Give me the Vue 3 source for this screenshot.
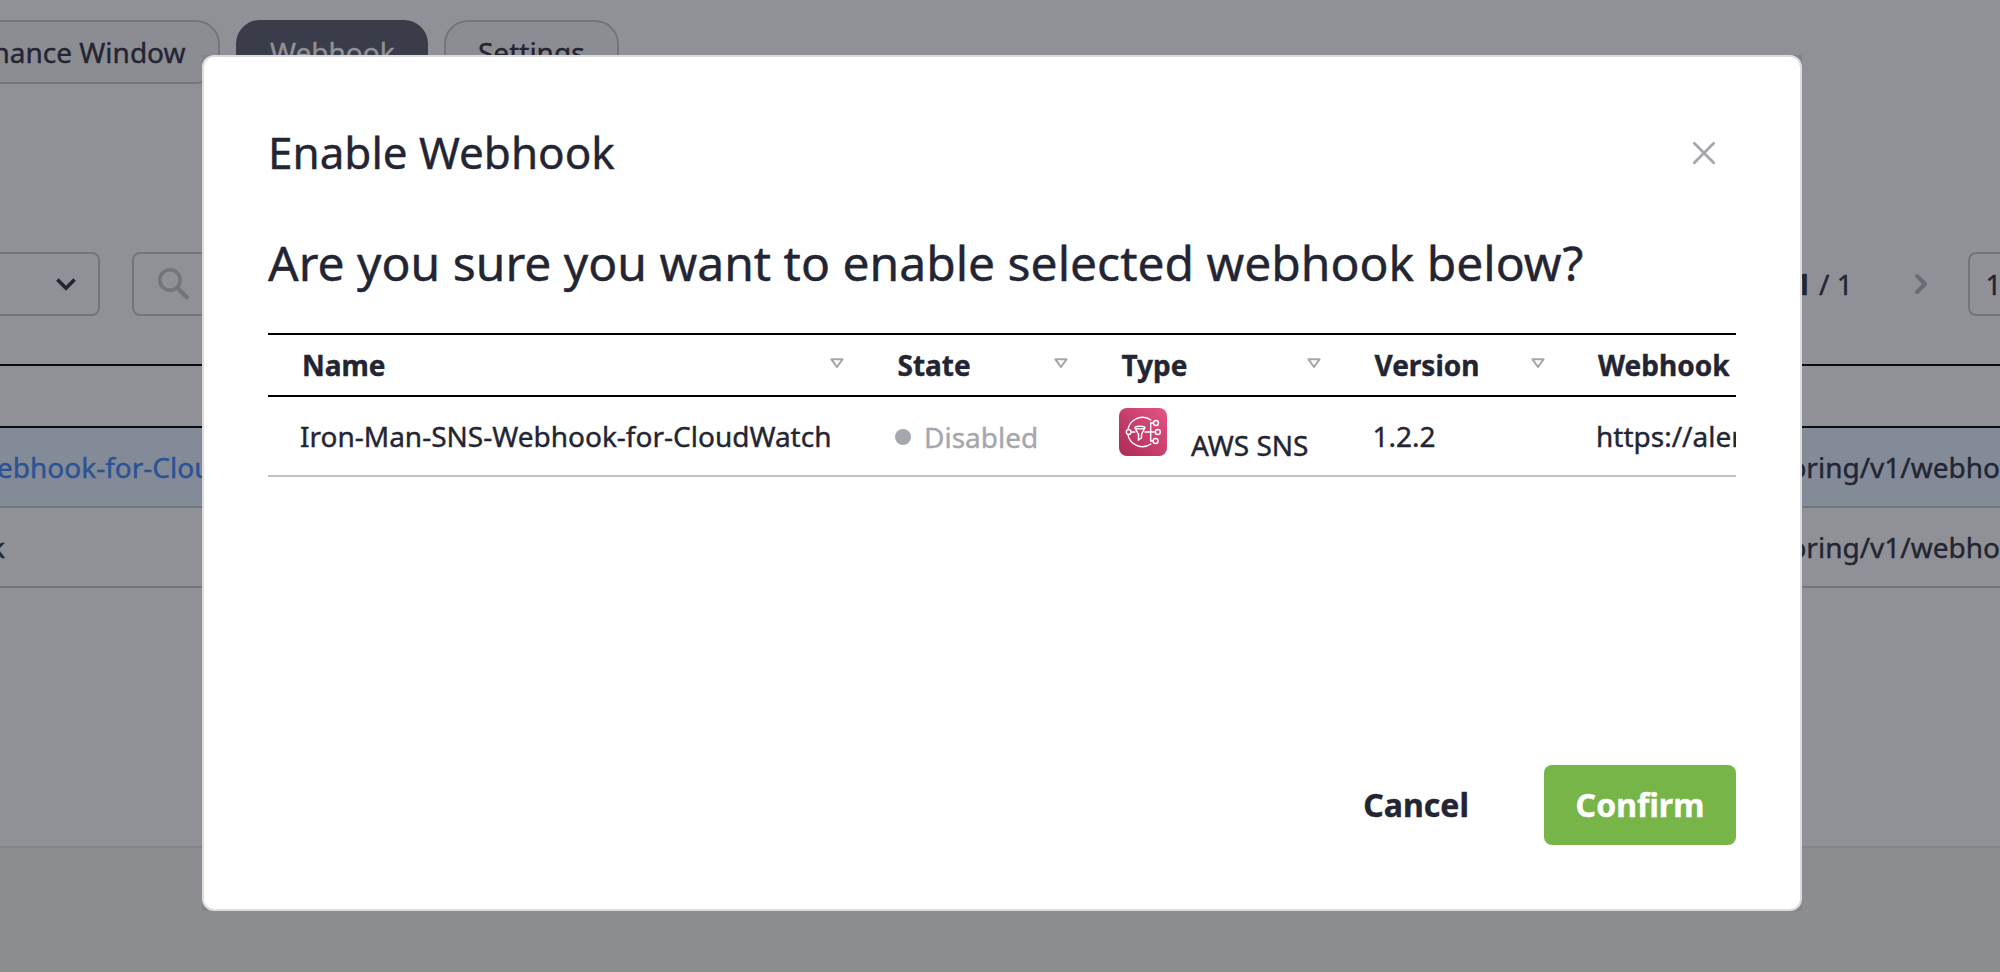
<script setup>
const tabs = [
  { label: 'nance Window', kind: 'first' },
  { label: 'Webhook', kind: 'active' },
  { label: 'Settings', kind: '' },
]
const bgRows = [
  { name: 'ebhook-for-Clou', url: 'oring/v1/webho', selected: true },
  { name: 'k', url: 'oring/v1/webho', selected: false },
]
const columns = [
  { label: 'Name', sort: true },
  { label: 'State', sort: true },
  { label: 'Type', sort: true },
  { label: 'Version', sort: true },
  { label: 'Webhook', sort: false },
]
</script>

<template>
  <div class="screen">
    <main class="page">
      <nav class="tabs">
        <div v-for="t in tabs" :key="t.label" class="tab" :class="t.kind">{{ t.label }}</div>
      </nav>
      <div class="toolbar">
        <div class="select">
          <svg width="24" height="16" viewBox="0 0 24 16"><path d="M3.4 3.6 12 12.2 20.6 3.6" fill="none" stroke="#232533" stroke-width="3.6" /></svg>
        </div>
        <div class="search">
          <svg width="34" height="34" viewBox="0 0 34 34" fill="none" stroke="#74757a"><circle cx="13" cy="13" r="10.2" stroke-width="3.6" /><path d="M21 21.5 31 31.5" stroke-width="4.4" /></svg>
        </div>
        <div class="pager"><b>1</b><span>/ 1</span></div>
        <svg class="next" width="16" height="24" viewBox="0 0 16 24"><path d="M4 4 12 12 4 20" fill="none" stroke="#6a6b76" stroke-width="3.9" stroke-linecap="round" stroke-linejoin="round" /></svg>
        <div class="size">1</div>
      </div>
      <div class="bg-head"></div>
      <div v-for="(r, i) in bgRows" :key="i" class="bg-row" :class="{ selected: r.selected }">
        <span class="bg-name">{{ r.name }}</span>
        <span class="bg-url">{{ r.url }}</span>
      </div>
    </main>

    <div class="overlay">
      <div class="shade">
        <section class="modal">
          <header class="modal-head">
            <h1>Enable Webhook</h1>
            <svg class="close" width="24" height="24" viewBox="0 0 24 24"><path d="M2.3 2.3 21.7 21.7M21.7 2.3 2.3 21.7" stroke="#a6a7ad" stroke-width="2.8" stroke-linecap="round" /></svg>
          </header>
          <h2>Are you sure you want to enable selected webhook below?</h2>
          <div class="table">
            <div class="row head">
              <div v-for="c in columns" :key="c.label" class="cell">
                <span>{{ c.label }}</span>
                <svg v-if="c.sort" class="sort" width="14" height="12" viewBox="0 0 14 12"><path d="M1.5 1.3H12.5L7 9Z" fill="none" stroke="#a6a7ad" stroke-width="2.1" stroke-linejoin="round" /></svg>
              </div>
            </div>
            <div class="row data">
              <div class="cell">Iron-Man-SNS-Webhook-for-CloudWatch</div>
              <div class="cell state"><i class="dot"></i><span>Disabled</span></div>
              <div class="cell type">
                <svg width="48" height="48" viewBox="0 0 48 48" fill="none" stroke="#fff" stroke-width="1.4">
                  <defs>
                    <linearGradient id="sns" x1="0" y1="1" x2="1" y2="0">
                      <stop offset="0" stop-color="#ad2a58" />
                      <stop offset="1" stop-color="#e45483" />
                    </linearGradient>
                  </defs>
                  <rect width="48" height="48" rx="8" fill="url(#sns)" stroke="none" />
                  <path d="M32.3 12.2A15 15 0 0 0 8.9 21.4M8.9 26.6A15 15 0 0 0 32.3 35.8" />
                  <circle cx="9.7" cy="24" r="2.4" />
                  <circle cx="37" cy="15" r="2.5" />
                  <circle cx="38.8" cy="24" r="2.5" />
                  <circle cx="36.6" cy="33" r="2.5" />
                  <path d="M34.5 15H31.7V33H34.1M12.2 24H16.4M25.5 24H36.3" />
                  <ellipse cx="20.9" cy="19.6" rx="5" ry="1.3" />
                  <path d="M15.9 19.8 19.5 26.5V32L22.5 30V26.5L25.9 19.8" />
                </svg>
                <span>AWS SNS</span>
              </div>
              <div class="cell">1.2.2</div>
              <div class="cell">https://aler</div>
            </div>
          </div>
          <footer class="actions">
            <button class="cancel">Cancel</button>
            <button class="confirm">Confirm</button>
          </footer>
        </section>
      </div>
    </div>
  </div>
</template>

<style>
html, body { overflow: hidden; background: #8c8d91; }
</style>

<style scoped>
* { box-sizing: border-box; }
.screen {
  position: relative;
  width: 2000px;
  height: 972px;
  overflow: hidden;
  background: #8c8d91;
  color: #232533;
  font: 28px/38px "Noto Sans", sans-serif;
  -webkit-text-stroke: 0.4px currentColor;
  white-space: nowrap;
}
.page {
  height: 848px;
  padding-top: 20px;
  background: #909196;
  border-bottom: 2px solid #838489;
}
.tabs { display: flex; gap: 16px; height: 64px; }
.tab {
  padding: 11px 32px 0;
  border: 2px solid #74757a;
  border-radius: 24px;
  background: #8c8d92;
}
.tab.first { width: 220px; padding-left: 0; border-left: 0; border-radius: 0 24px 24px 0; text-indent: -7.5px; }
.tab.active { width: 192px; background: #3b3c4a; border-color: #3b3c4a; color: #919297; }
.toolbar { display: flex; align-items: center; height: 64px; margin-top: 168px; }
.toolbar > * { flex: none; }
.select, .search, .size { height: 64px; border: 2px solid #74757a; border-radius: 8px; display: flex; align-items: center; }
.select { width: 100px; margin-right: 32px; border-left: 0; border-radius: 0 8px 8px 0; justify-content: flex-end; padding-right: 20px; }
.search { width: 600px; padding-left: 23px; }
.pager { display: flex; gap: 8px; margin-left: 1063px; width: 118px; }
.next { margin-right: 39px; }
.size { width: 32px; padding-left: 15.5px; border-right: 0; border-radius: 8px 0 0 8px; }
.bg-head { height: 64px; margin-top: 48px; border: solid #0b0c10; border-width: 2px 0; }
.bg-row { display: flex; height: 80px; padding-top: 20px; border-bottom: 2px solid #74757a; }
.bg-row.selected { background: #838a98; }
.bg-row.selected .bg-name { color: #2d5293; }
.bg-name { width: 1801.5px; margin-left: -3px; }
.bg-row:not(.selected) .bg-name { margin-left: -10px; width: 1808.5px; }

.overlay { position: absolute; inset: 0; display: flex; justify-content: center; padding-top: 55px; padding-left: 4px; }
.shade { width: 1600px; height: 856px; background: #838489; }
.modal {
  display: flex;
  flex-direction: column;
  height: 856px;
  padding: 64px;
  border: 2px solid #dcdcde;
  border-radius: 12px;
  background: #fff;
}
.modal-head { display: flex; align-items: center; justify-content: space-between; height: 64px; padding-right: 20px; }
h1, h2 { margin: 0; font-weight: 400; }
h1 { font-size: 44px; line-height: 60px; margin-top: -2px; }
h2 { font-size: 48px; line-height: 66px; margin-top: 45px; }
.table { width: 1468px; margin-top: 37px; overflow: hidden; }
.row { display: grid; grid-template-columns: 595.5px 224px 253px 223.5px 172px; }
.head { height: 64px; border: solid #000; border-width: 2px 0; font-weight: 700; }
.head .cell { display: flex; justify-content: space-between; padding: 11px 19.5px 0 34px; }
.sort { margin-top: 12px; flex: none; }
.data { height: 80px; border-bottom: 2px solid #c1c1c7; }
.data .cell { padding: 20px 0 0 32px; overflow: hidden; }
.data .cell.state { display: flex; gap: 13px; color: #a6a7ad; padding: 21px 0 0 31.5px; }
.dot { width: 16px; height: 16px; margin-top: 11px; border-radius: 50%; background: #a6a7ad; }
.data .cell.type { display: flex; gap: 24px; padding: 11px 0 0 31.5px; }
.type span { margin-top: 18px; }
.actions { display: flex; justify-content: flex-end; gap: 43px; margin-top: auto; }
button { height: 80px; padding: 0 32px; border: 0; border-radius: 8px; background: none; color: #232533; font: 700 32px/44px "Noto Sans", sans-serif; }
.confirm { width: 192px; padding: 0; background: #78b548; color: #fff; }
</style>
